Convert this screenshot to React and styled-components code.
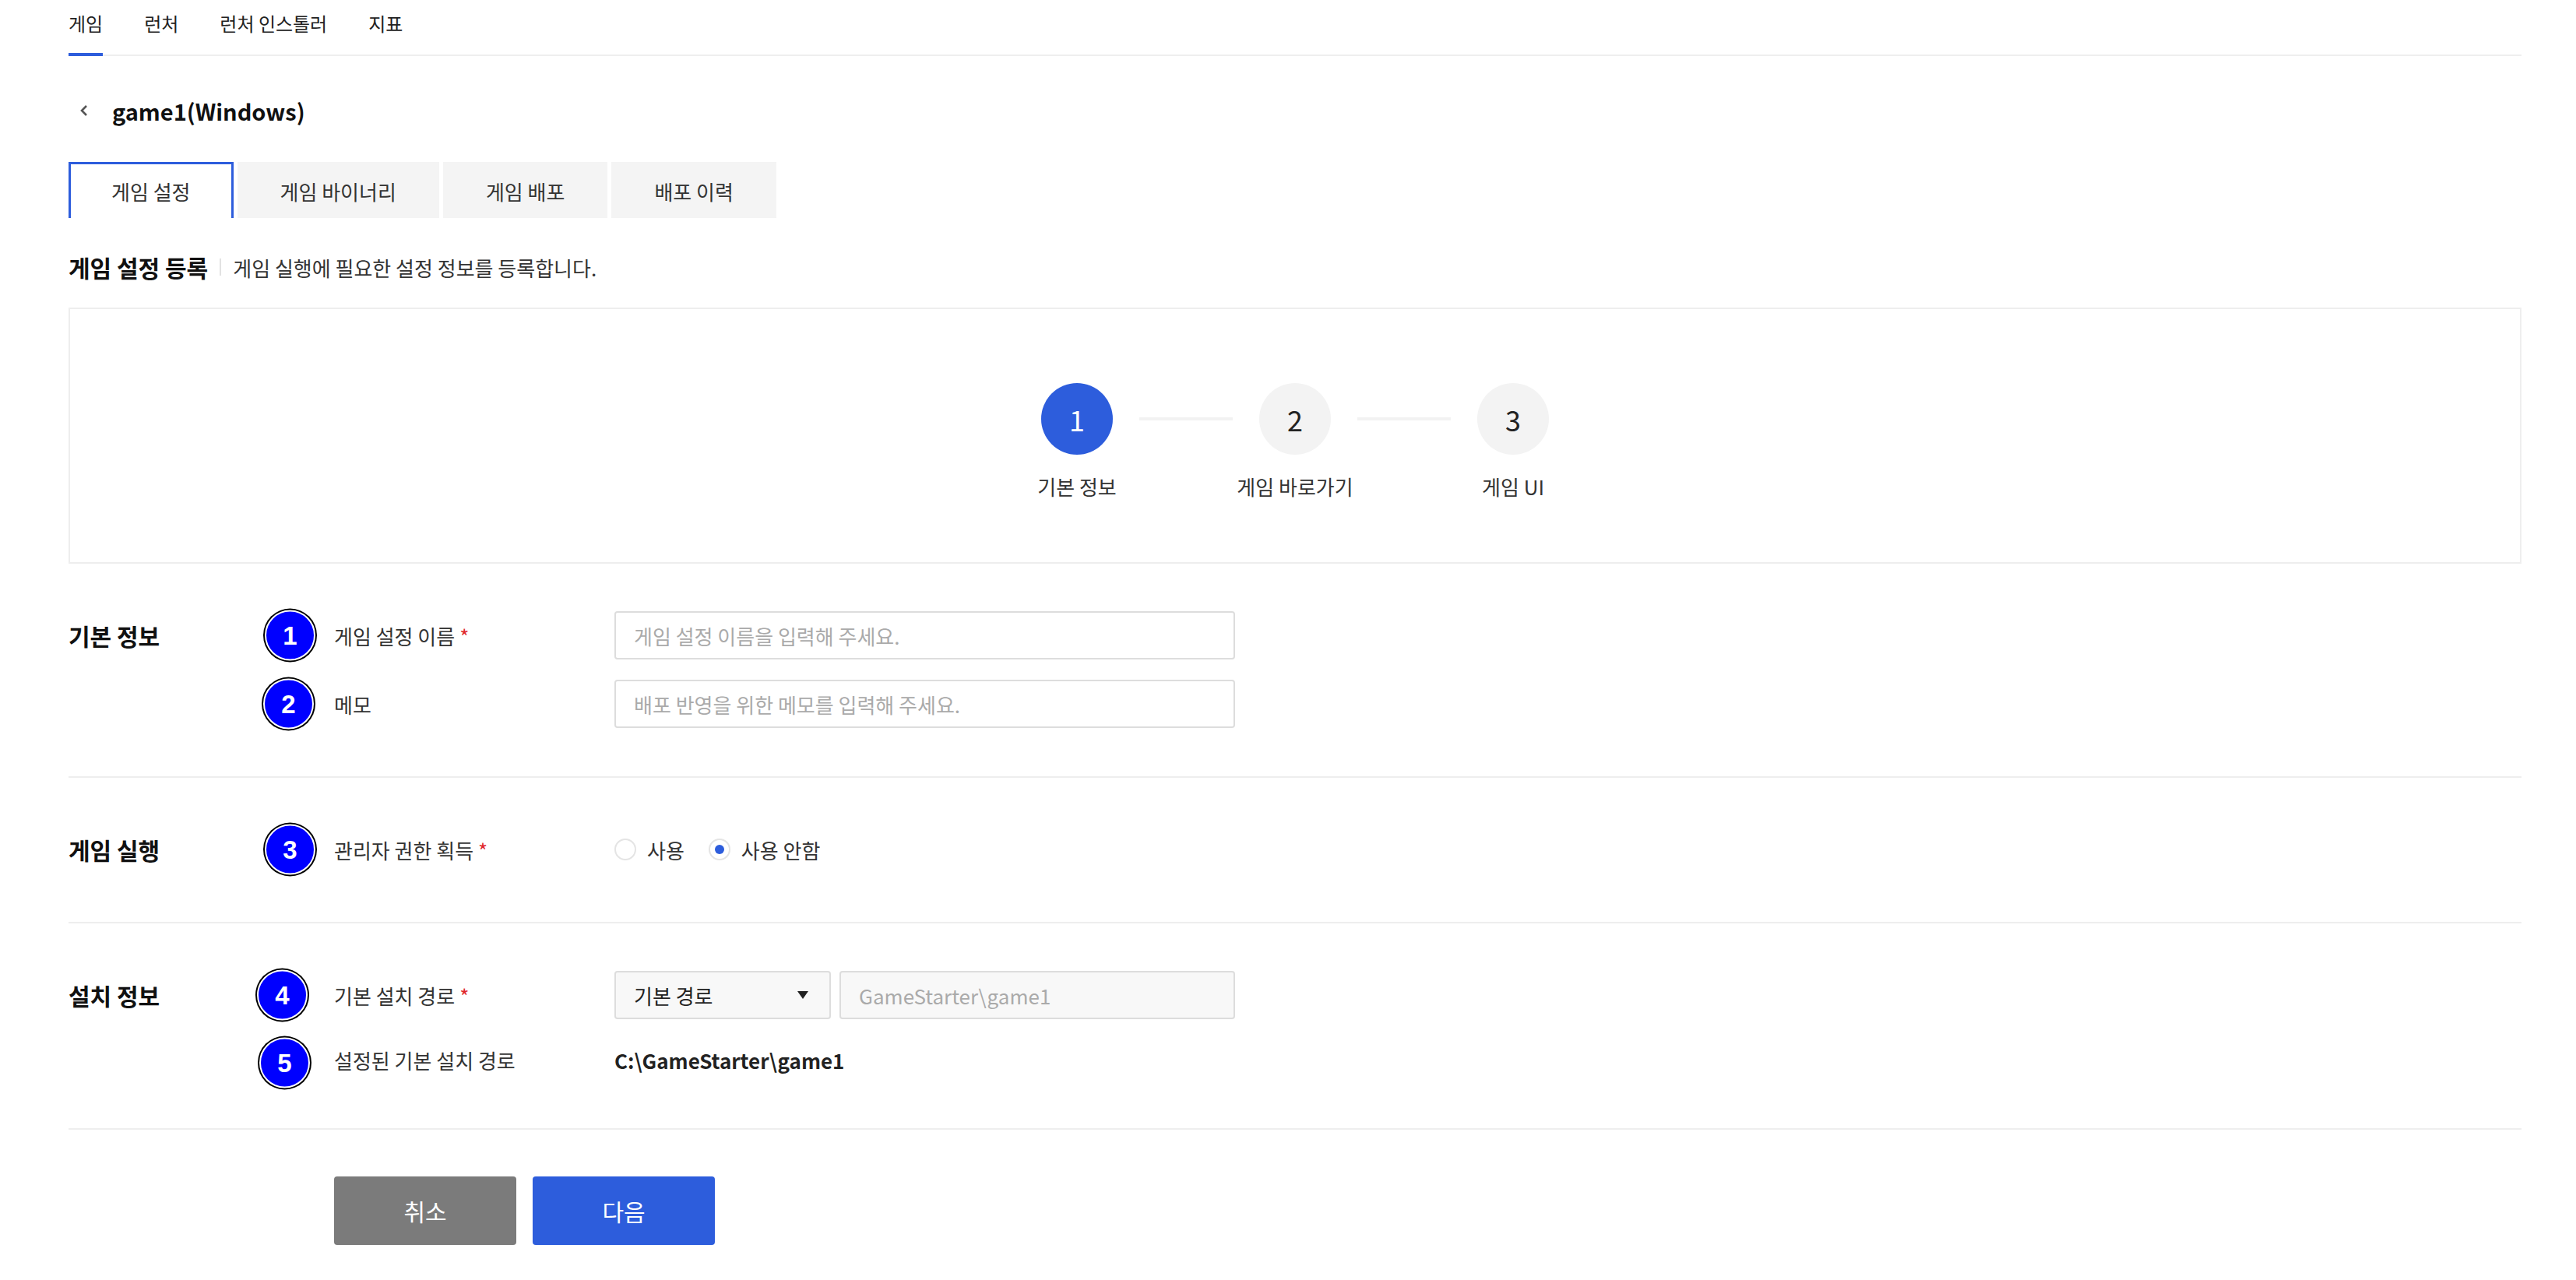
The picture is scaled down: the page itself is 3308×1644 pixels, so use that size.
import React from "react";
import styled, { createGlobalStyle } from "styled-components";

const BLUE = "#2d5ddc";

const GlobalStyle = createGlobalStyle`
  body {
    margin: 0;
    background: #fff;
    font-family: "Noto Sans CJK KR", "Noto Sans", sans-serif;
    color: #222;
  }
  * {
    box-sizing: border-box;
  }
`;

const Page = styled.div`
  padding: 0 70px 40px 88px;
`;

const TopNav = styled.nav`
  display: flex;
  gap: 53px;
  border-bottom: 2px solid #eee;
`;

const NavItem = styled.a`
  font-size: 24px;
  line-height: 28px;
  padding: 16px 0 24px;
  margin-bottom: -2px;
  color: #222;
  border-bottom: 4px solid ${(p) => (p.$active ? BLUE : "transparent")};
  cursor: pointer;
`;

const TitleRow = styled.div`
  display: flex;
  align-items: center;
  margin-top: 48px;
  padding-left: 13px;
  gap: 29px;
`;

const Title = styled.h1`
  margin: 0;
  font-size: 29px;
  line-height: 44px;
  font-weight: 700;
  color: #111;
`;

const TabBar = styled.div`
  display: flex;
  gap: 5px;
  margin-top: 44px;
`;

const Tab = styled.button`
  height: 72px;
  padding: 0 52px;
  min-width: 209px;
  font-family: inherit;
  font-size: 26px;
  color: #333;
  background: ${(p) => (p.$active ? "#fff" : "#f4f4f4")};
  border: 3px solid ${(p) => (p.$active ? BLUE : "#f4f4f4")};
  border-bottom: none;
  cursor: pointer;
`;

const Heading = styled.div`
  display: flex;
  align-items: center;
  margin-top: 43px;
  height: 40px;
`;

const HeadingTitle = styled.h2`
  margin: 0;
  font-size: 30px;
  font-weight: 700;
  color: #111;
`;

const HeadingDivider = styled.span`
  width: 2px;
  height: 22px;
  background: #e2e2e2;
  margin: 0 15px;
`;

const HeadingDesc = styled.span`
  font-size: 26px;
  color: #333;
`;

const StepBox = styled.div`
  margin-top: 32px;
  border: 2px solid #eee;
  padding: 95px 0 79px;
  display: flex;
  justify-content: center;
  align-items: flex-start;
`;

const Step = styled.div`
  width: 92px;
  display: flex;
  flex-direction: column;
  align-items: center;
  gap: 23px;
`;

const StepCircle = styled.div`
  width: 92px;
  height: 92px;
  border-radius: 50%;
  display: flex;
  align-items: center;
  justify-content: center;
  font-size: 36px;
  background: ${(p) => (p.$active ? BLUE : "#f3f3f3")};
  color: ${(p) => (p.$active ? "#fff" : "#222")};
`;

const StepLabel = styled.span`
  font-size: 26px;
  line-height: 36px;
  white-space: nowrap;
  color: #333;
`;

const StepLine = styled.div`
  width: 120px;
  height: 4px;
  margin: 44px 34px 0;
  background: #f2f2f2;
`;

const Section = styled.section`
  display: flex;
  padding: 61px 0 62px;
  border-bottom: 2px solid #eee;
`;

const SectionTitle = styled.h3`
  width: 341px;
  flex-shrink: 0;
  margin: 0;
  font-size: 30px;
  line-height: 62px;
  font-weight: 700;
  color: #111;
`;

const Fields = styled.div`
  display: flex;
  flex-direction: column;
  gap: 26px;
`;

const FieldRow = styled.div`
  position: relative;
  display: flex;
  align-items: center;
  min-height: ${(p) => p.$height || 62}px;
`;

const Badge = styled.span`
  position: absolute;
  left: ${(p) => p.$x}px;
  top: 50%;
  transform: translateY(calc(-50% + ${(p) => p.$dy || 0}px));
  width: 65px;
  height: 65px;
  border-radius: 50%;
  background: #0000ff;
  border: 2px solid #fff;
  box-shadow: 0 0 0 2px #000;
  display: flex;
  align-items: center;
  justify-content: center;
  color: #fff;
  font-family: "Liberation Sans", Arial, sans-serif;
  font-weight: 700;
  font-size: 33px;
`;

const FieldLabel = styled.label`
  width: 360px;
  flex-shrink: 0;
  font-size: 26px;
  color: #333;
`;

const Required = styled.span`
  color: #e0262b;
  margin-left: 6px;
`;

const TextInput = styled.input`
  width: ${(p) => p.$width || 797}px;
  height: 62px;
  padding: 0 23px;
  border: 2px solid #ddd;
  border-radius: 4px;
  background: ${(p) => (p.$muted ? "#f8f8f8" : "#fff")};
  font-family: inherit;
  font-size: 26px;
  color: #222;
  outline: none;

  &::placeholder {
    color: #aaa;
  }
`;

const InputGroup = styled.div`
  display: flex;
  gap: 11px;
`;

const Select = styled.div`
  width: 278px;
  height: 62px;
  padding: 0 26px 0 23px;
  border: 2px solid #ddd;
  border-radius: 4px;
  background: #f8f8f8;
  display: flex;
  align-items: center;
  justify-content: space-between;
  font-size: 26px;
  color: #222;
`;

const RadioGroup = styled.div`
  display: flex;
  align-items: center;
  gap: 31px;
`;

const RadioOption = styled.label`
  display: flex;
  align-items: center;
  gap: 14px;
  font-size: 26px;
  color: #333;
`;

const RadioMark = styled.span`
  width: 28px;
  height: 28px;
  border-radius: 50%;
  border: 2px solid #e4e4e4;
  background: #fff;
  display: flex;
  align-items: center;
  justify-content: center;

  &::after {
    content: "";
    width: 12px;
    height: 12px;
    border-radius: 50%;
    background: ${(p) => (p.$checked ? BLUE : "transparent")};
  }
`;

const PathText = styled.span`
  font-size: 26px;
  font-weight: 700;
  color: #222;
`;

const Actions = styled.div`
  display: flex;
  gap: 21px;
  margin-top: 60px;
  padding-left: 341px;
`;

const Button = styled.button`
  width: 234px;
  height: 88px;
  border: none;
  border-radius: 4px;
  background: ${(p) => (p.$primary ? BLUE : "#7b7b7b")};
  color: #fff;
  font-family: inherit;
  font-size: 30px;
  cursor: pointer;
`;

const ChevronLeft = () => (
  <svg width="14" height="18" viewBox="0 0 14 18">
    <path d="M10 3 L4 9 L10 15" fill="none" stroke="#555" strokeWidth="2.6" />
  </svg>
);

const CaretDown = () => (
  <svg width="16" height="12" viewBox="0 0 16 12">
    <path d="M1 1 H15 L8 11 Z" fill="#222" />
  </svg>
);

const steps = ["기본 정보", "게임 바로가기", "게임 UI"];

const App = () => {
  return (
    <Page>
      <GlobalStyle />
      <TopNav>
        <NavItem $active>게임</NavItem>
        <NavItem>런처</NavItem>
        <NavItem>런처 인스톨러</NavItem>
        <NavItem>지표</NavItem>
      </TopNav>

      <TitleRow>
        <ChevronLeft />
        <Title>game1(Windows)</Title>
      </TitleRow>

      <TabBar>
        <Tab $active>게임 설정</Tab>
        <Tab>게임 바이너리</Tab>
        <Tab>게임 배포</Tab>
        <Tab>배포 이력</Tab>
      </TabBar>

      <Heading>
        <HeadingTitle>게임 설정 등록</HeadingTitle>
        <HeadingDivider />
        <HeadingDesc>게임 실행에 필요한 설정 정보를 등록합니다.</HeadingDesc>
      </Heading>

      <StepBox>
        {steps.map((label, i) => (
          <React.Fragment key={label}>
            {i > 0 && <StepLine />}
            <Step>
              <StepCircle $active={i === 0}>{i + 1}</StepCircle>
              <StepLabel>{label}</StepLabel>
            </Step>
          </React.Fragment>
        ))}
      </StepBox>

      <Section>
        <SectionTitle>기본 정보</SectionTitle>
        <Fields>
          <FieldRow>
            <Badge $x={-89}>1</Badge>
            <FieldLabel>
              게임 설정 이름<Required>*</Required>
            </FieldLabel>
            <TextInput placeholder="게임 설정 이름을 입력해 주세요." />
          </FieldRow>
          <FieldRow>
            <Badge $x={-91}>2</Badge>
            <FieldLabel>메모</FieldLabel>
            <TextInput placeholder="배포 반영을 위한 메모를 입력해 주세요." />
          </FieldRow>
        </Fields>
      </Section>

      <Section>
        <SectionTitle>게임 실행</SectionTitle>
        <Fields>
          <FieldRow>
            <Badge $x={-89}>3</Badge>
            <FieldLabel>
              관리자 권한 획득<Required>*</Required>
            </FieldLabel>
            <RadioGroup>
              <RadioOption>
                <RadioMark />
                사용
              </RadioOption>
              <RadioOption>
                <RadioMark $checked />
                사용 안함
              </RadioOption>
            </RadioGroup>
          </FieldRow>
        </Fields>
      </Section>

      <Section>
        <SectionTitle>설치 정보</SectionTitle>
        <Fields>
          <FieldRow>
            <Badge $x={-99}>4</Badge>
            <FieldLabel>
              기본 설치 경로<Required>*</Required>
            </FieldLabel>
            <InputGroup>
              <Select>
                기본 경로
                <CaretDown />
              </Select>
              <TextInput $muted $width={508} placeholder={"GameStarter\\game1"} readOnly />
            </InputGroup>
          </FieldRow>
          <FieldRow $height={52}>
            <Badge $x={-96} $dy={4}>5</Badge>
            <FieldLabel>설정된 기본 설치 경로</FieldLabel>
            <PathText>{"C:\\GameStarter\\game1"}</PathText>
          </FieldRow>
        </Fields>
      </Section>

      <Actions>
        <Button>취소</Button>
        <Button $primary>다음</Button>
      </Actions>
    </Page>
  );
};

export default App;
